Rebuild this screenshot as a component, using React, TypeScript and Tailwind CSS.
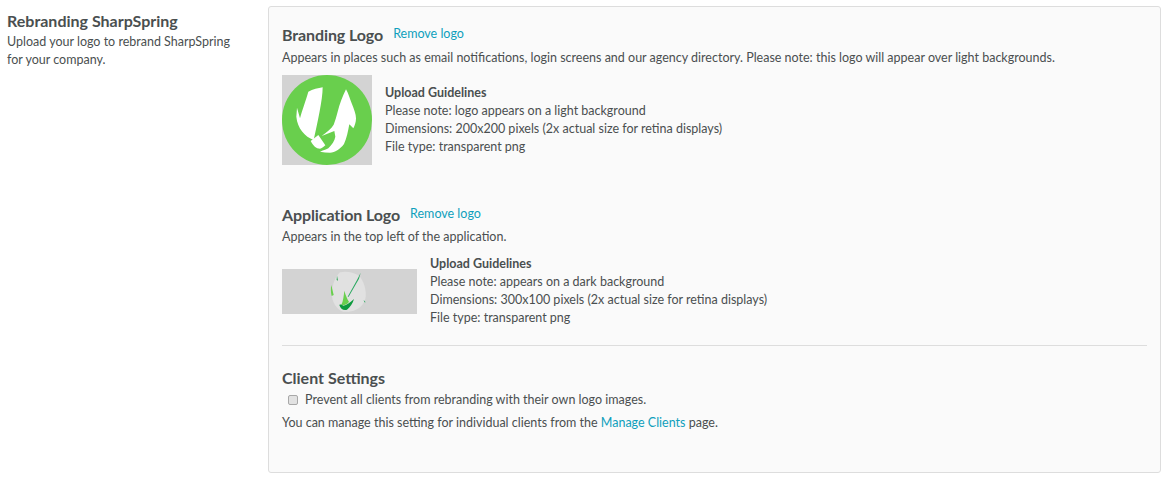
function BrandLogo() {
  return (
    <svg width="90" height="90" viewBox="36 15 270 270" className="block">
      <rect x="36" y="15" width="270" height="270" fill="#d3d3d3" />
      <circle cx="171" cy="150" r="135" fill="#69cf4d" />
      <path d="M115 65 C128 58 145 54 158 52 C158 90 142 160 131 210 C105 200 82 175 79 140 L81 113 L90 145 C95 125 108 90 115 65 Z" fill="#fff" />
      <path d="M122 213 L145 195 L166 226 C160 232 155 235 150 236 C138 236 130 228 122 213 Z" fill="#fff" />
      <path d="M228 58 C236 72 240 88 245 100 C252 118 258 132 258 145 C258 158 254 167 250 175 L238 163 C234 185 230 205 222 222 C210 238 195 248 180 248 C170 248 160 247 150 245 C162 240 170 238 175 235 C186 224 194 212 196 200 L193 183 L155 198 C170 186 184 176 191 164 C196 150 199 140 203 125 C209 102 218 78 228 58 Z" fill="#fff" />
    </svg>
  );
}

function AppLogo() {
  return (
    <svg width="135" height="45" viewBox="21 27 405 135" className="block">
      <rect x="21" y="27" width="405" height="135" fill="#d3d3d3" />
      <path d="M195 37 C215 32 240 38 255 50 C270 70 278 105 268 125 C255 150 225 158 205 155 C185 150 170 125 170 100 C172 75 180 50 195 37 Z" fill="#e1e1e1" />
      <path d="M169 75 L176 105 L170 108 C167 98 167 85 169 75 Z" fill="#69cf4d" />
      <path d="M186 47 L189 62 L185 60 Z" fill="#22a24f" />
      <path d="M257 38 L252 56 L221 110 L218 110 L246 60 Z" fill="#2aa860" />
      <path d="M208 92 C212 105 216 116 222 125 C218 132 208 137 199 135 C205 122 206 108 208 92 Z" fill="#69cf4d" />
      <path d="M193 135 C196 132 200 134 205 137 C215 136 225 128 237 117 C233 130 226 142 216 149 C206 153 196 146 193 135 Z" fill="#0d9a3d" />
      <path d="M266 120 L272 127 L268 127 Z" fill="#2aa860" />
    </svg>
  );
}

function Guide({ note, dim }: { note: string; dim: string }) {
  return (
    <div className="text-[12.5px] leading-[18px]">
      <div className="font-bold">Upload Guidelines</div>
      <div>{note}</div>
      <div>{dim}</div>
      <div>File type: transparent png</div>
    </div>
  );
}

function Head({ title }: { title: string }) {
  return (
    <div className="flex items-center gap-[10px]">
      <h3 className="text-[16px] leading-[20px] font-bold tracking-[-0.1px]">{title}</h3>
      <a className="text-[12.5px] leading-[20px] pb-[2px] text-[#0f9fbc]">Remove logo</a>
    </div>
  );
}

export default function App() {
  return (
    <div className="flex w-[1168px] h-[480px] bg-white text-[#4a4f50] text-[12.5px] font-['Lato',sans-serif] overflow-hidden">
      <div className="w-[268px] shrink-0 pl-[7px] pt-[11px]">
        <h3 className="text-[16px] leading-[20px] font-bold">Rebranding SharpSpring</h3>
        <p className="leading-[18px] mt-[2px]">
          Upload your logo to rebrand SharpSpring
          <br />
          for your company.
        </p>
      </div>
      <div className="mt-[6px] h-[467px] w-[893px] rounded-[3px] border border-[#dddddd] bg-[#fafafa] px-[13px] pt-[17px]">
        <Head title="Branding Logo" />
        <p className="leading-[18px] mt-[3px]">
          Appears in places such as email notifications, login screens and our agency directory. Please note: this logo will appear over light backgrounds.
        </p>
        <div className="flex gap-[13px] mt-[8px]">
          <BrandLogo />
          <div className="pt-[9px]">
            <Guide note="Please note: logo appears on a light background" dim="Dimensions: 200x200 pixels (2x actual size for retina displays)" />
          </div>
        </div>
        <div className="mt-[39px]">
          <Head title="Application Logo" />
        </div>
        <p className="leading-[18px] mt-[2px]">Appears in the top left of the application.</p>
        <div className="flex gap-[13px] mt-[9px]">
          <div className="pt-[14px]">
            <AppLogo />
          </div>
          <Guide note="Please note: appears on a dark background" dim="Dimensions: 300x100 pixels (2x actual size for retina displays)" />
        </div>
        <div className="border-t border-[#dddddd] mt-[18px]" />
        <h3 className="text-[16px] leading-[20px] font-bold mt-[22px]">Client Settings</h3>
        <div className="flex items-center mt-[3px] h-[18px]">
          <span className="ml-[6px] w-[10px] h-[10px] rounded-[2px] border border-[#a8a8a8] bg-[#e2e2e2]" />
          <span className="ml-[7px]">Prevent all clients from rebranding with their own logo images.</span>
        </div>
        <p className="leading-[18px] mt-[5px]">
          You can manage this setting for individual clients from the <a className="text-[#0f9fbc]">Manage Clients</a> page.
        </p>
      </div>
    </div>
  );
}
